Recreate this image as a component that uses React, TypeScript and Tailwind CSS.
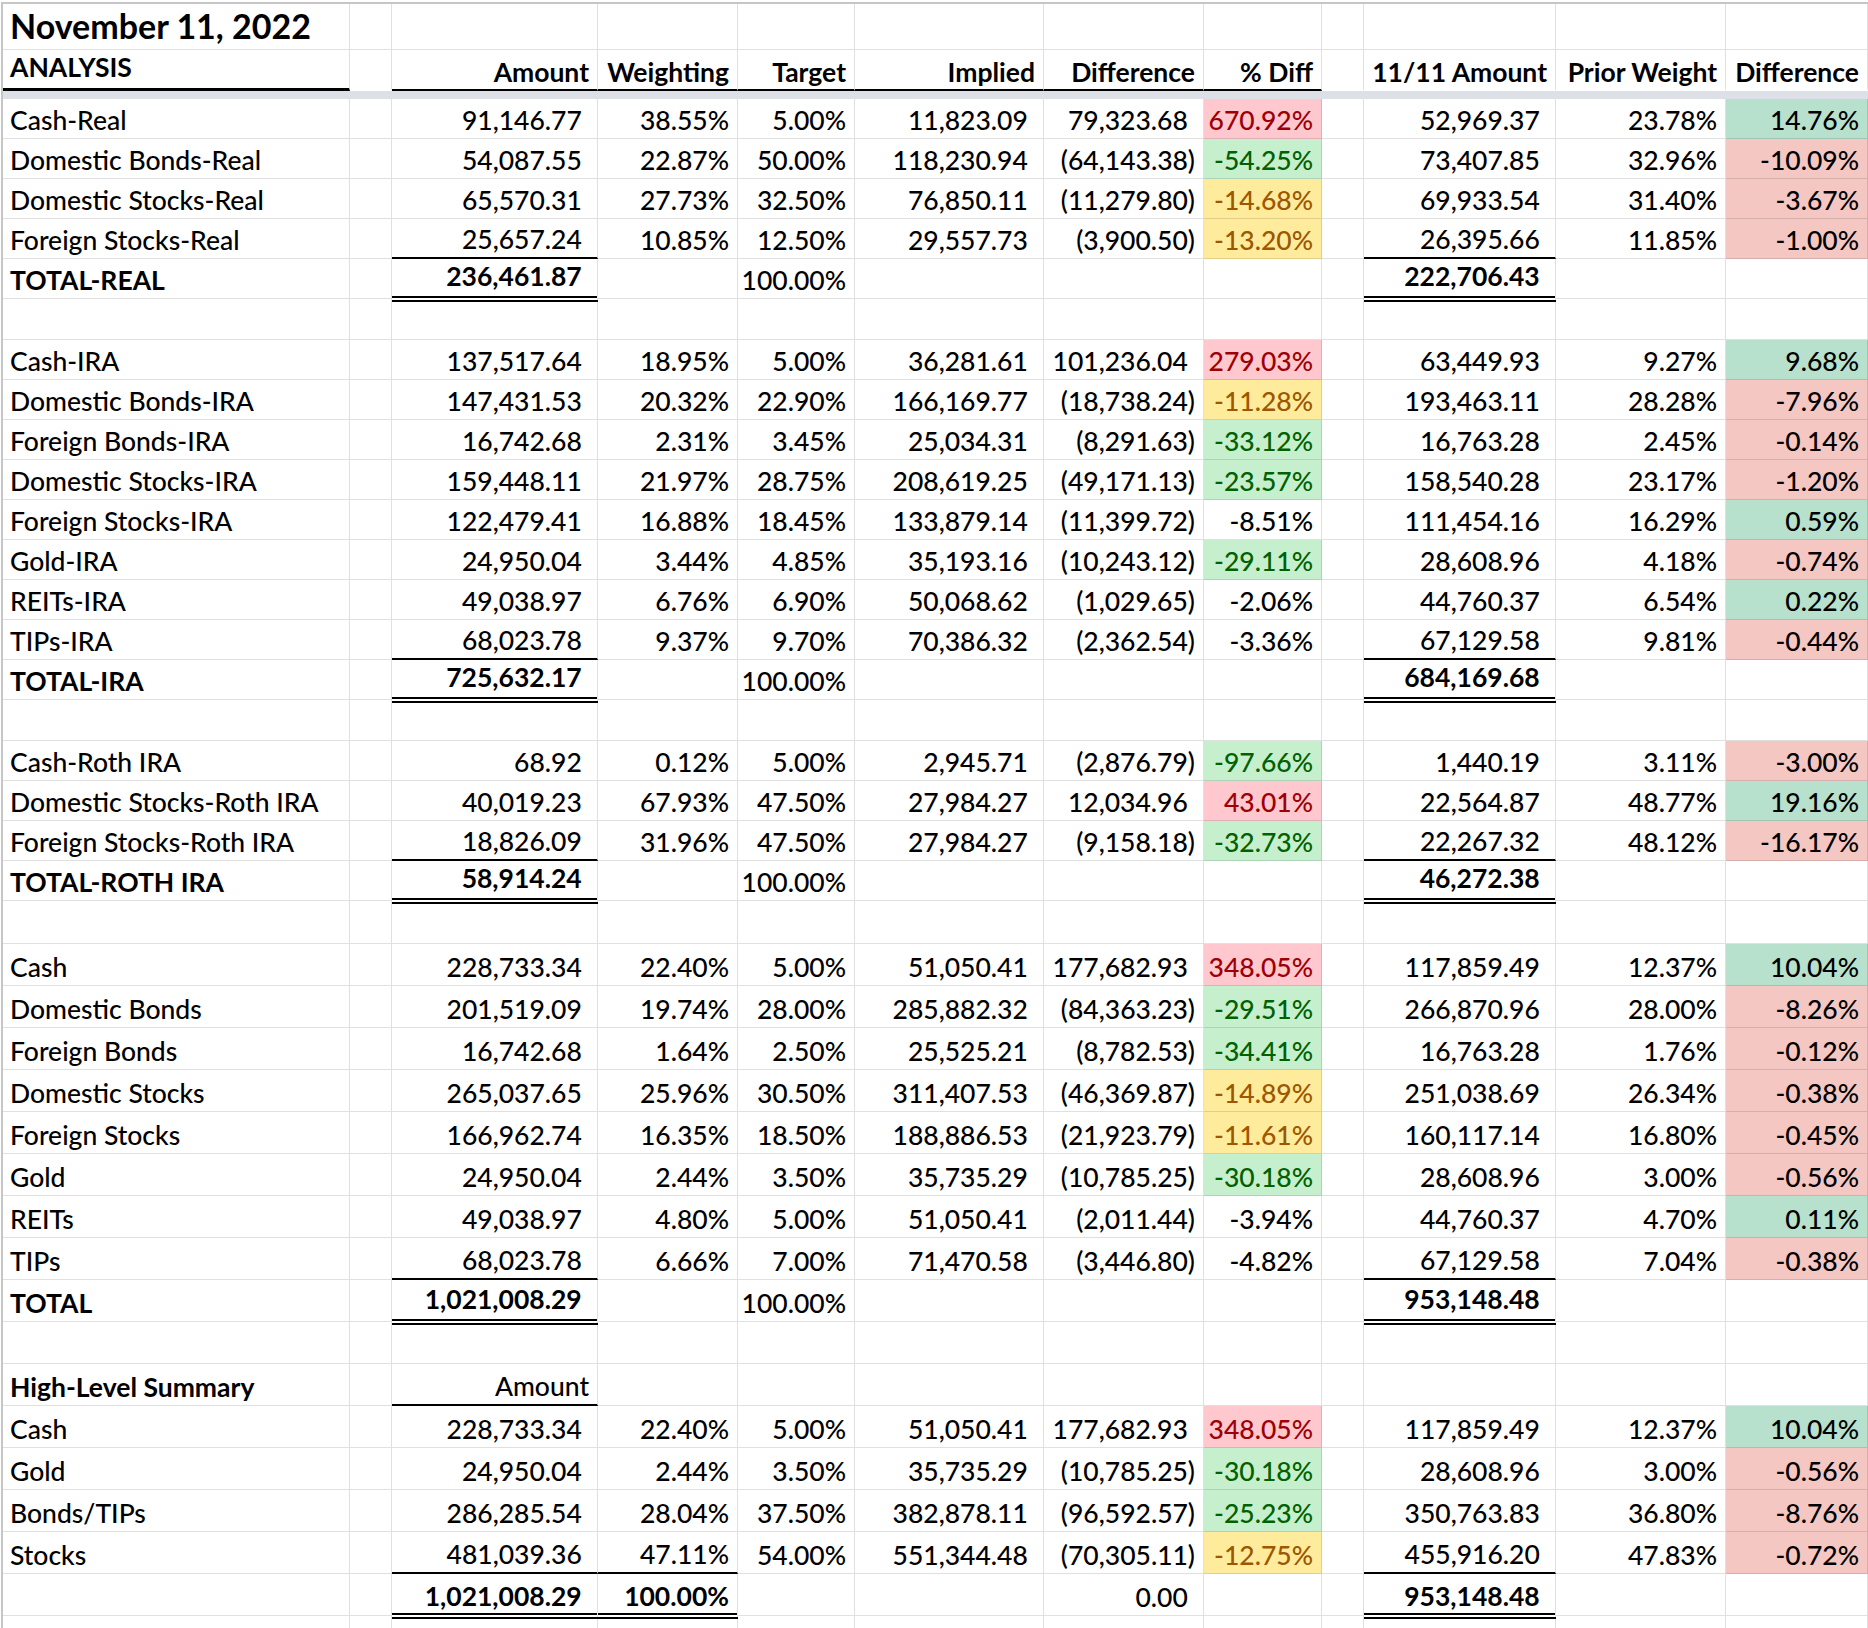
import type { ReactNode } from "react";

type Tone = "red" | "green" | "yellow" | "none";
type Edge = "grid" | "black" | "thick" | "double" | "clear";

interface Line {
  label: string;
  amount: string;
  weight: string;
  target: string;
  implied: string;
  diff: string;
  pct: string;
  tone: Tone;
  prior: string;
  priorWeight: string;
  change: string;
  up: boolean;
}

const GRID =
  "grid grid-cols-[347px_42px_206px_140px_117px_189px_160px_118px_42px_192px_170px_142px]";

const EDGE: Record<Edge, string> = {
  grid: "border-b border-b-[#0000001f]",
  black: "border-b-2 border-b-black",
  thick: "border-b-[3px] border-b-black",
  double: "border-b-[6px] border-b-black border-double relative z-10 -mb-[3px]",
  clear: "border-b-2 border-b-transparent",
};

const TONE: Record<Tone, string> = {
  red: "bg-[#ffc7ce] text-[#9c0006]",
  green: "bg-[#c6efce] text-[#006100]",
  yellow: "bg-[#ffeb9c] text-[#9c5700]",
  none: "",
};

function Cell({
  h,
  edge = "grid",
  right,
  className = "",
  children,
}: {
  h: string;
  edge?: Edge;
  right?: boolean;
  className?: string;
  children?: ReactNode;
}) {
  return (
    <div
      className={`${h} flex items-end whitespace-nowrap border-r border-r-[#0000001f] ${EDGE[edge]} ${
        right ? "justify-end pr-[8px]" : "pl-[7px]"
      } ${className}`}
    >
      {children}
    </div>
  );
}

// accounting format: positives keep room for the closing paren
function acct(v: string) {
  if (!v) return null;
  if (v.startsWith("(")) return v;
  return (
    <>
      {v}
      <span className="invisible">)</span>
    </>
  );
}

const real: Line[] = [
  { label: "Cash-Real", amount: "91,146.77", weight: "38.55%", target: "5.00%", implied: "11,823.09", diff: "79,323.68", pct: "670.92%", tone: "red", prior: "52,969.37", priorWeight: "23.78%", change: "14.76%", up: true },
  { label: "Domestic Bonds-Real", amount: "54,087.55", weight: "22.87%", target: "50.00%", implied: "118,230.94", diff: "(64,143.38)", pct: "-54.25%", tone: "green", prior: "73,407.85", priorWeight: "32.96%", change: "-10.09%", up: false },
  { label: "Domestic Stocks-Real", amount: "65,570.31", weight: "27.73%", target: "32.50%", implied: "76,850.11", diff: "(11,279.80)", pct: "-14.68%", tone: "yellow", prior: "69,933.54", priorWeight: "31.40%", change: "-3.67%", up: false },
  { label: "Foreign Stocks-Real", amount: "25,657.24", weight: "10.85%", target: "12.50%", implied: "29,557.73", diff: "(3,900.50)", pct: "-13.20%", tone: "yellow", prior: "26,395.66", priorWeight: "11.85%", change: "-1.00%", up: false },
];

const ira: Line[] = [
  { label: "Cash-IRA", amount: "137,517.64", weight: "18.95%", target: "5.00%", implied: "36,281.61", diff: "101,236.04", pct: "279.03%", tone: "red", prior: "63,449.93", priorWeight: "9.27%", change: "9.68%", up: true },
  { label: "Domestic Bonds-IRA", amount: "147,431.53", weight: "20.32%", target: "22.90%", implied: "166,169.77", diff: "(18,738.24)", pct: "-11.28%", tone: "yellow", prior: "193,463.11", priorWeight: "28.28%", change: "-7.96%", up: false },
  { label: "Foreign Bonds-IRA", amount: "16,742.68", weight: "2.31%", target: "3.45%", implied: "25,034.31", diff: "(8,291.63)", pct: "-33.12%", tone: "green", prior: "16,763.28", priorWeight: "2.45%", change: "-0.14%", up: false },
  { label: "Domestic Stocks-IRA", amount: "159,448.11", weight: "21.97%", target: "28.75%", implied: "208,619.25", diff: "(49,171.13)", pct: "-23.57%", tone: "green", prior: "158,540.28", priorWeight: "23.17%", change: "-1.20%", up: false },
  { label: "Foreign Stocks-IRA", amount: "122,479.41", weight: "16.88%", target: "18.45%", implied: "133,879.14", diff: "(11,399.72)", pct: "-8.51%", tone: "none", prior: "111,454.16", priorWeight: "16.29%", change: "0.59%", up: true },
  { label: "Gold-IRA", amount: "24,950.04", weight: "3.44%", target: "4.85%", implied: "35,193.16", diff: "(10,243.12)", pct: "-29.11%", tone: "green", prior: "28,608.96", priorWeight: "4.18%", change: "-0.74%", up: false },
  { label: "REITs-IRA", amount: "49,038.97", weight: "6.76%", target: "6.90%", implied: "50,068.62", diff: "(1,029.65)", pct: "-2.06%", tone: "none", prior: "44,760.37", priorWeight: "6.54%", change: "0.22%", up: true },
  { label: "TIPs-IRA", amount: "68,023.78", weight: "9.37%", target: "9.70%", implied: "70,386.32", diff: "(2,362.54)", pct: "-3.36%", tone: "none", prior: "67,129.58", priorWeight: "9.81%", change: "-0.44%", up: false },
];

const roth: Line[] = [
  { label: "Cash-Roth IRA", amount: "68.92", weight: "0.12%", target: "5.00%", implied: "2,945.71", diff: "(2,876.79)", pct: "-97.66%", tone: "green", prior: "1,440.19", priorWeight: "3.11%", change: "-3.00%", up: false },
  { label: "Domestic Stocks-Roth IRA", amount: "40,019.23", weight: "67.93%", target: "47.50%", implied: "27,984.27", diff: "12,034.96", pct: "43.01%", tone: "red", prior: "22,564.87", priorWeight: "48.77%", change: "19.16%", up: true },
  { label: "Foreign Stocks-Roth IRA", amount: "18,826.09", weight: "31.96%", target: "47.50%", implied: "27,984.27", diff: "(9,158.18)", pct: "-32.73%", tone: "green", prior: "22,267.32", priorWeight: "48.12%", change: "-16.17%", up: false },
];

const all: Line[] = [
  { label: "Cash", amount: "228,733.34", weight: "22.40%", target: "5.00%", implied: "51,050.41", diff: "177,682.93", pct: "348.05%", tone: "red", prior: "117,859.49", priorWeight: "12.37%", change: "10.04%", up: true },
  { label: "Domestic Bonds", amount: "201,519.09", weight: "19.74%", target: "28.00%", implied: "285,882.32", diff: "(84,363.23)", pct: "-29.51%", tone: "green", prior: "266,870.96", priorWeight: "28.00%", change: "-8.26%", up: false },
  { label: "Foreign Bonds", amount: "16,742.68", weight: "1.64%", target: "2.50%", implied: "25,525.21", diff: "(8,782.53)", pct: "-34.41%", tone: "green", prior: "16,763.28", priorWeight: "1.76%", change: "-0.12%", up: false },
  { label: "Domestic Stocks", amount: "265,037.65", weight: "25.96%", target: "30.50%", implied: "311,407.53", diff: "(46,369.87)", pct: "-14.89%", tone: "yellow", prior: "251,038.69", priorWeight: "26.34%", change: "-0.38%", up: false },
  { label: "Foreign Stocks", amount: "166,962.74", weight: "16.35%", target: "18.50%", implied: "188,886.53", diff: "(21,923.79)", pct: "-11.61%", tone: "yellow", prior: "160,117.14", priorWeight: "16.80%", change: "-0.45%", up: false },
  { label: "Gold", amount: "24,950.04", weight: "2.44%", target: "3.50%", implied: "35,735.29", diff: "(10,785.25)", pct: "-30.18%", tone: "green", prior: "28,608.96", priorWeight: "3.00%", change: "-0.56%", up: false },
  { label: "REITs", amount: "49,038.97", weight: "4.80%", target: "5.00%", implied: "51,050.41", diff: "(2,011.44)", pct: "-3.94%", tone: "none", prior: "44,760.37", priorWeight: "4.70%", change: "0.11%", up: true },
  { label: "TIPs", amount: "68,023.78", weight: "6.66%", target: "7.00%", implied: "71,470.58", diff: "(3,446.80)", pct: "-4.82%", tone: "none", prior: "67,129.58", priorWeight: "7.04%", change: "-0.38%", up: false },
];

const summary: Line[] = [
  { label: "Cash", amount: "228,733.34", weight: "22.40%", target: "5.00%", implied: "51,050.41", diff: "177,682.93", pct: "348.05%", tone: "red", prior: "117,859.49", priorWeight: "12.37%", change: "10.04%", up: true },
  { label: "Gold", amount: "24,950.04", weight: "2.44%", target: "3.50%", implied: "35,735.29", diff: "(10,785.25)", pct: "-30.18%", tone: "green", prior: "28,608.96", priorWeight: "3.00%", change: "-0.56%", up: false },
  { label: "Bonds/TIPs", amount: "286,285.54", weight: "28.04%", target: "37.50%", implied: "382,878.11", diff: "(96,592.57)", pct: "-25.23%", tone: "green", prior: "350,763.83", priorWeight: "36.80%", change: "-8.76%", up: false },
  { label: "Stocks", amount: "481,039.36", weight: "47.11%", target: "54.00%", implied: "551,344.48", diff: "(70,305.11)", pct: "-12.75%", tone: "yellow", prior: "455,916.20", priorWeight: "47.83%", change: "-0.72%", up: false },
];

function DataRow({ r, h, last, weightEdge }: { r: Line; h: string; last?: boolean; weightEdge?: boolean }) {
  return (
    <>
      <Cell h={h}>{r.label}</Cell>
      <Cell h={h} />
      <Cell h={h} right edge={last ? "black" : "grid"}>{acct(r.amount)}</Cell>
      <Cell h={h} right edge={weightEdge ? "black" : "grid"}>{r.weight}</Cell>
      <Cell h={h} right>{r.target}</Cell>
      <Cell h={h} right>{acct(r.implied)}</Cell>
      <Cell h={h} right>{acct(r.diff)}</Cell>
      <Cell h={h} right className={TONE[r.tone]}>{r.pct}</Cell>
      <Cell h={h} />
      <Cell h={h} right edge={last ? "black" : "grid"}>{acct(r.prior)}</Cell>
      <Cell h={h} right>{r.priorWeight}</Cell>
      <Cell h={h} right className={r.up ? "bg-[#b7e1cd]" : "bg-[#f4c7c3]"}>{r.change}</Cell>
    </>
  );
}

function TotalRow({ label, amount, prior, h, tallH }: { label: string; amount: string; prior: string; h: string; tallH: string }) {
  return (
    <>
      <Cell h={h} className="font-bold">{label}</Cell>
      <Cell h={h} />
      <Cell h={tallH} right edge="double" className="font-bold">{acct(amount)}</Cell>
      <Cell h={h} />
      <Cell h={h} right>100.00%</Cell>
      <Cell h={h} />
      <Cell h={h} />
      <Cell h={h} />
      <Cell h={h} />
      <Cell h={tallH} right edge="double" className="font-bold">{acct(prior)}</Cell>
      <Cell h={h} />
      <Cell h={h} />
    </>
  );
}

function BlankRow({ h }: { h: string }) {
  return (
    <>
      {Array.from({ length: 12 }).map((_, i) => (
        <Cell key={i} h={h} />
      ))}
    </>
  );
}

function Section({ rows, label, total, prior }: { rows: Line[]; label: string; total: string; prior: string }) {
  return (
    <>
      {rows.map((r, i) => (
        <DataRow key={r.label} r={r} h="h-[40px] pb-[5px]" last={i === rows.length - 1} />
      ))}
      <TotalRow label={label} amount={total} prior={prior} h="h-[40px] pb-[5px]" tallH="h-[43px] pb-[7px]" />
    </>
  );
}

export default function App() {
  const headers = ["Amount", "Weighting", "Target", "Implied", "Difference", "% Diff"];
  const hh = "h-[41px] pb-[4px] font-bold";
  const big = "h-[42px] pb-[5px]";

  return (
    <div className="w-[1868px] h-[1628px] overflow-hidden bg-white pt-[2px] pl-[1px] text-black font-['Lato','Open_Sans',sans-serif] font-medium text-[26.5px] leading-none">
      <div className={`${GRID} border-t-2 border-l-2 border-[#c6c6c6]`}>
        {/* title row */}
        <Cell h="h-[46px] pb-[6px]" className="text-[34px] font-bold">November 11, 2022</Cell>
        {Array.from({ length: 11 }).map((_, i) => (
          <Cell key={i} h="h-[46px]" />
        ))}

        {/* column headings */}
        <Cell h="h-[41px] pb-[8px] font-bold" edge="thick">ANALYSIS</Cell>
        <Cell h={hh} edge="clear" />
        {headers.map((t) => (
          <Cell key={t} h={hh} right edge="black">{t}</Cell>
        ))}
        <Cell h={hh} edge="clear" />
        <Cell h={hh} right edge="clear">11/11 Amount</Cell>
        <Cell h={hh} right edge="clear">Prior Weight</Cell>
        <Cell h={hh} right edge="clear">Difference</Cell>

        {/* frozen pane divider */}
        <div className="col-span-12 h-[8px] bg-[#dde1e7]" />

        <Section rows={real} label="TOTAL-REAL" total="236,461.87" prior="222,706.43" />
        <BlankRow h="h-[41px]" />
        <Section rows={ira} label="TOTAL-IRA" total="725,632.17" prior="684,169.68" />
        <BlankRow h="h-[41px]" />
        <Section rows={roth} label="TOTAL-ROTH IRA" total="58,914.24" prior="46,272.38" />
        <BlankRow h="h-[43px]" />

        {all.map((r, i) => (
          <DataRow key={r.label} r={r} h={big} last={i === all.length - 1} />
        ))}
        <TotalRow label="TOTAL" amount="1,021,008.29" prior="953,148.48" h={big} tallH="h-[45px] pb-[7px]" />
        <BlankRow h="h-[42px]" />

        {/* high-level summary */}
        <Cell h={big} className="font-bold">High-Level Summary</Cell>
        <Cell h={big} />
        <Cell h={big} right edge="black">Amount</Cell>
        {Array.from({ length: 9 }).map((_, i) => (
          <Cell key={i} h={big} />
        ))}
        {summary.map((r, i) => (
          <DataRow
            key={r.label}
            r={r}
            h={big}
            last={i === summary.length - 1}
            weightEdge={i === summary.length - 1}
          />
        ))}
        <Cell h={big} />
        <Cell h={big} />
        <Cell h="h-[45px] pb-[4px]" right edge="double" className="font-bold">{acct("1,021,008.29")}</Cell>
        <Cell h="h-[45px] pb-[4px]" right edge="double" className="font-bold">100.00%</Cell>
        <Cell h={big} />
        <Cell h={big} />
        <Cell h={big} right>{acct("0.00")}</Cell>
        <Cell h={big} />
        <Cell h={big} />
        <Cell h="h-[45px] pb-[4px]" right edge="double" className="font-bold">{acct("953,148.48")}</Cell>
        <Cell h={big} />
        <Cell h={big} />
        <BlankRow h="h-[42px]" />
      </div>
    </div>
  );
}
